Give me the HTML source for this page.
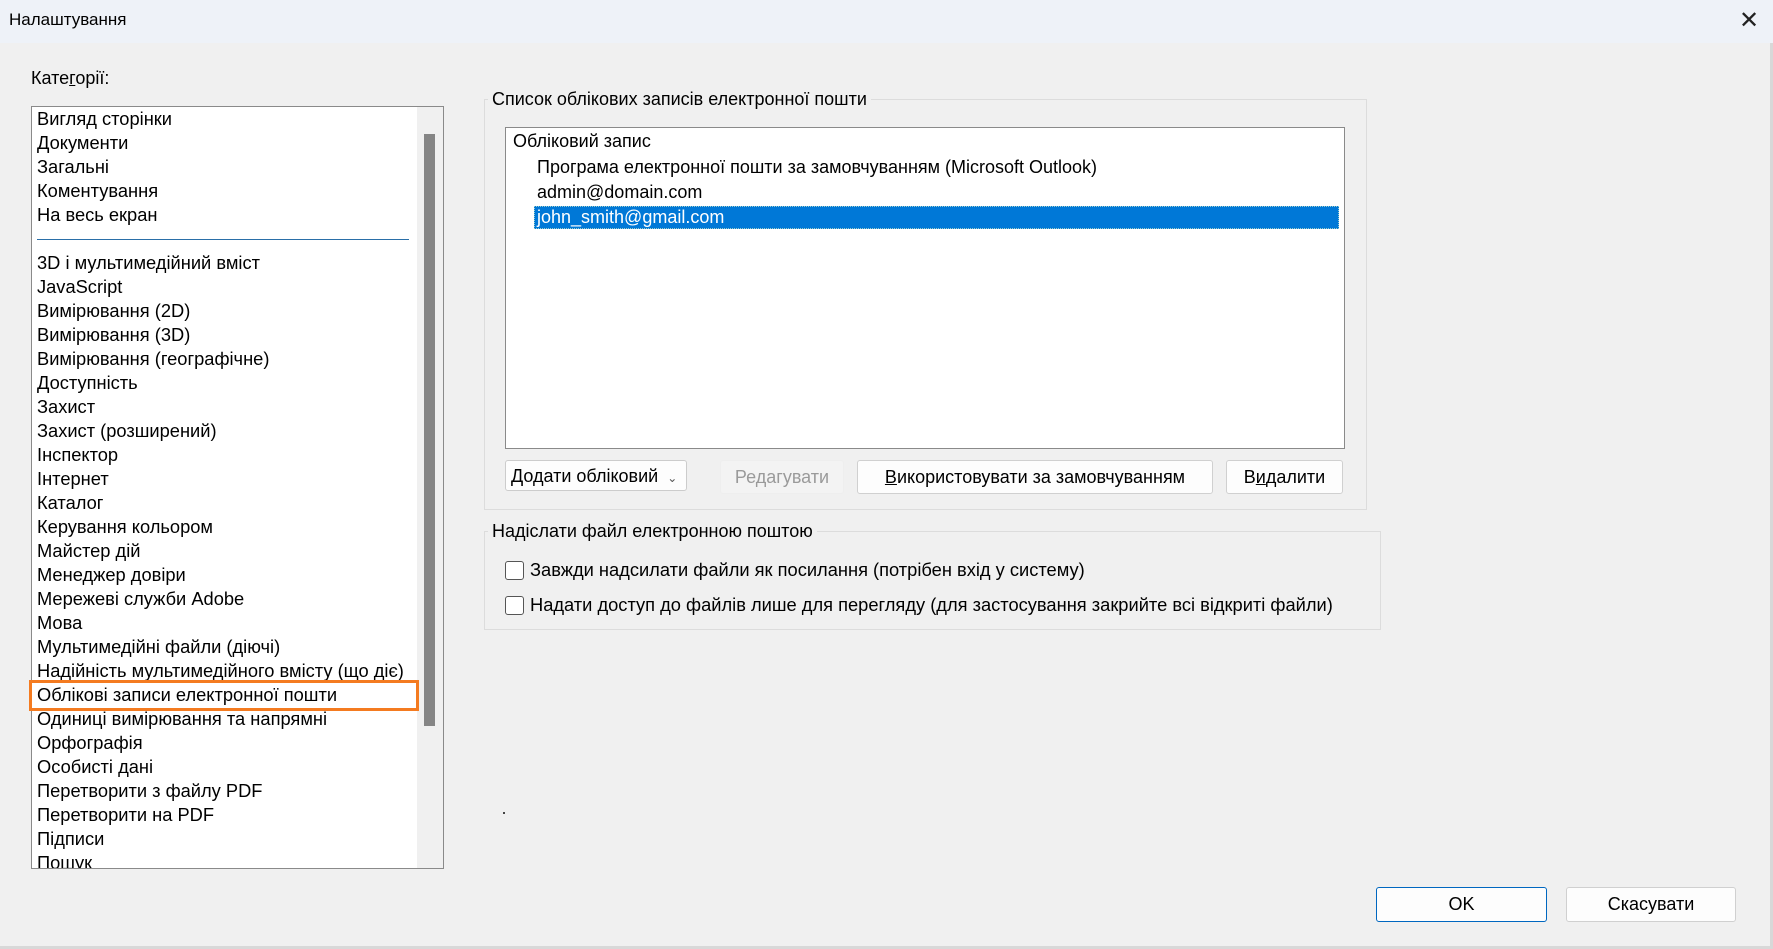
<!DOCTYPE html>
<html><head><meta charset="utf-8"><style>
*{box-sizing:border-box;margin:0;padding:0}
body{width:1773px;height:949px;background:#f0f0f0;font-family:"Liberation Sans",sans-serif;color:#000;position:relative;overflow:hidden;font-size:18px}
.a{position:absolute;white-space:nowrap}
.title{left:0;top:0;width:1773px;height:43px;background:#eef2f8}
.list{left:31px;top:106px;width:413px;height:763px;background:#fff;border:1px solid #8a8a8a;overflow:hidden}
.it{position:absolute;left:5px;line-height:24px;font-size:18.3px}
.grp{border:1px solid #dcdcdc}
.gt{background:#f0f0f0;padding:0 4px;line-height:20px;font-size:18px}
.btn{background:#fdfdfd;border:1px solid #d0d0d0;border-radius:3px;text-align:center;font-size:18px}
.cb{width:19px;height:19px;border:1px solid #555;border-radius:3px;background:#fff}
</style></head><body>
<div class="a title"></div>
<div class="a" style="left:9px;top:10px;font-size:17px">Налаштування</div>
<div class="a" style="left:1739px;top:6px;font-size:24px;color:#222;font-family:'DejaVu Sans',sans-serif">✕</div>
<div class="a" style="left:31px;top:68px;font-size:18px">Кате<u>г</u>орії:</div>
<div class="a list">
<div class="it" style="height:1px;background:#2a6fa8;left:5px;width:372px;top:132px"></div>
<div class="it" style="top:0px">Вигляд сторінки</div>
<div class="it" style="top:24px">Документи</div>
<div class="it" style="top:48px">Загальні</div>
<div class="it" style="top:72px">Коментування</div>
<div class="it" style="top:96px">На весь екран</div>
<div class="it" style="top:144px">3D і мультимедійний вміст</div>
<div class="it" style="top:168px">JavaScript</div>
<div class="it" style="top:192px">Вимірювання (2D)</div>
<div class="it" style="top:216px">Вимірювання (3D)</div>
<div class="it" style="top:240px">Вимірювання (географічне)</div>
<div class="it" style="top:264px">Доступність</div>
<div class="it" style="top:288px">Захист</div>
<div class="it" style="top:312px">Захист (розширений)</div>
<div class="it" style="top:336px">Інспектор</div>
<div class="it" style="top:360px">Інтернет</div>
<div class="it" style="top:384px">Каталог</div>
<div class="it" style="top:408px">Керування кольором</div>
<div class="it" style="top:432px">Майстер дій</div>
<div class="it" style="top:456px">Менеджер довіри</div>
<div class="it" style="top:480px">Мережеві служби Adobe</div>
<div class="it" style="top:504px">Мова</div>
<div class="it" style="top:528px">Мультимедійні файли (діючі)</div>
<div class="it" style="top:552px">Надійність мультимедійного вмісту (що діє)</div>
<div class="it" style="top:576px">Облікові записи електронної пошти</div>
<div class="it" style="top:600px">Одиниці вимірювання та напрямні</div>
<div class="it" style="top:624px">Орфографія</div>
<div class="it" style="top:648px">Особисті дані</div>
<div class="it" style="top:672px">Перетворити з файлу PDF</div>
<div class="it" style="top:696px">Перетворити на PDF</div>
<div class="it" style="top:720px">Підписи</div>
<div class="it" style="top:744px">Пошук</div>
<div style="position:absolute;left:385px;top:0;width:27px;height:763px;background:#f0f0f0"></div>
<div style="position:absolute;left:392px;top:27px;width:11px;height:592px;background:#858585"></div>
</div>
<div class="a" style="left:29px;top:680px;width:390px;height:31px;border:3px solid #f47b20"></div>

<div class="a grp" style="left:484px;top:99px;width:883px;height:411px"></div>
<div class="a gt" style="left:488px;top:89px">Список облікових записів електронної пошти</div>
<div class="a" style="left:505px;top:127px;width:840px;height:322px;background:#fff;border:1px solid #8a8a8a"></div>
<div class="a" style="left:513px;top:131px;line-height:20px">Обліковий запис</div>
<div class="a" style="left:537px;top:157px;line-height:20px">Програма електронної пошти за замовчуванням (Microsoft Outlook)</div>
<div class="a" style="left:537px;top:182px;line-height:20px">admin@domain.com</div>
<div class="a" style="left:534px;top:206px;width:805px;height:23px;background:#0078d7;border:1px dotted #9cc"></div>
<div class="a" style="left:537px;top:207px;line-height:20px;color:#fff">john_smith@gmail.com</div>

<div class="a btn" style="left:505px;top:460px;width:182px;height:31px;text-align:left;padding:5px 5px;border-color:#ccc">Додати обліковий <span style="font-size:12px;color:#555;margin-left:4px">&#8964;</span></div>
<div class="a btn" style="left:720px;top:460px;width:124px;height:34px;line-height:32px;color:#9a9a9a;background:#f3f3f3;border-color:#eee">Редагувати</div>
<div class="a btn" style="left:857px;top:460px;width:356px;height:34px;line-height:32px"><u>В</u>икористовувати за замовчуванням</div>
<div class="a btn" style="left:1226px;top:460px;width:117px;height:34px;line-height:32px">В<u>и</u>далити</div>

<div class="a grp" style="left:484px;top:531px;width:897px;height:99px"></div>
<div class="a gt" style="left:488px;top:521px">Надіслати файл електронною поштою</div>
<div class="a cb" style="left:505px;top:561px"></div>
<div class="a" style="left:530px;top:560px;line-height:20px;font-size:18.3px">Завжди надсилати файли як посилання (потрібен вхід у систему)</div>
<div class="a cb" style="left:505px;top:596px"></div>
<div class="a" style="left:530px;top:595px;line-height:20px;font-size:18.3px">Надати доступ до файлів лише для перегляду (для застосування закрийте всі відкриті файли)</div>
<div class="a" style="left:503px;top:812px;width:2px;height:2px;background:#444"></div>

<div class="a btn" style="left:1376px;top:887px;width:171px;height:35px;line-height:33px;border:1px solid #0067c0">OK</div>
<div class="a btn" style="left:1566px;top:887px;width:170px;height:35px;line-height:33px">Скасувати</div>
<div class="a" style="left:0;top:946px;width:1773px;height:3px;background:#d8d8d8"></div>
<div class="a" style="left:1770px;top:43px;width:3px;height:906px;background:#d8d8d8"></div>
</body></html>
